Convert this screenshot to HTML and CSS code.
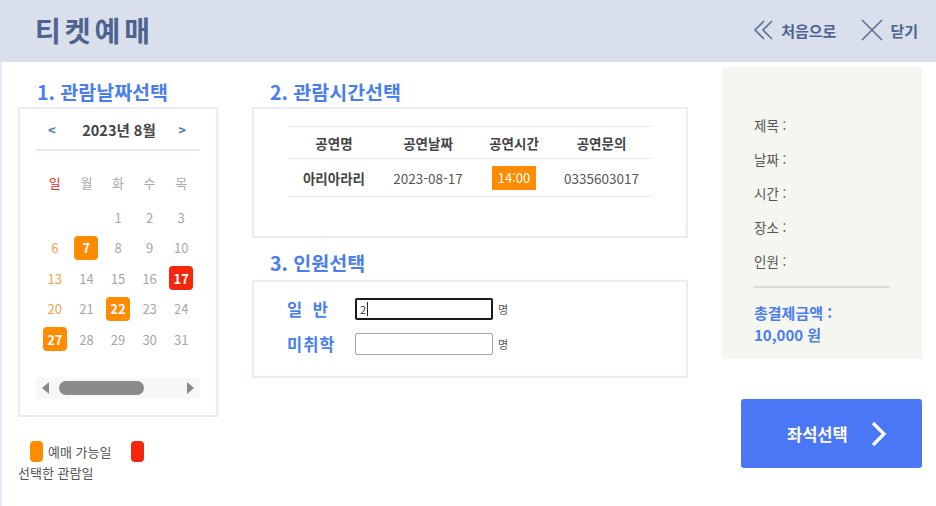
FILE: index.html
```html
<!DOCTYPE html>
<html lang="ko">
<head>
<meta charset="utf-8">
<title>티켓예매</title>
<link rel="stylesheet" href="styles.css">
</head>
<body>
<header class="header">
  <h1 class="brand">티켓예매</h1>
  <nav class="nav">
    <a class="nav-item">
      <svg class="ico" width="22" height="22" viewBox="0 0 22 22"><path d="M11 2 L2 11 L11 20 M19 2 L10 11 L19 20" fill="none" stroke="#5a6e96" stroke-width="1.6"/></svg>
      <span>처음으로</span>
    </a>
    <a class="nav-item">
      <svg class="ico" width="24" height="22" viewBox="0 0 24 22"><path d="M2 1 L22 21 M22 1 L2 21" fill="none" stroke="#5a6e96" stroke-width="1.6"/></svg>
      <span>닫기</span>
    </a>
  </nav>
</header>
<main class="main">
  <section class="col col-date">
    <h2 class="sec-title">1. 관람날짜선택</h2>
    <div class="cal">
      <div class="cal-head">
        <span class="cal-arrow">&lt;</span>
        <span class="cal-month">2023년 8월</span>
        <span class="cal-arrow">&gt;</span>
      </div>
      <div class="cal-grid">
        <span class="wd sun">일</span><span class="wd">월</span><span class="wd">화</span><span class="wd">수</span><span class="wd">목</span>
        <span class="gap-row"></span><span class="gap-row"></span><span class="gap-row"></span><span class="gap-row"></span><span class="gap-row"></span>
        <span class="d"></span><span class="d"></span><span class="d">1</span><span class="d">2</span><span class="d">3</span>
        <span class="d sun">6</span><span class="d"><b class="mark">7</b></span><span class="d">8</span><span class="d">9</span><span class="d">10</span>
        <span class="d sun">13</span><span class="d">14</span><span class="d">15</span><span class="d">16</span><span class="d"><b class="mark sel">17</b></span>
        <span class="d sun">20</span><span class="d">21</span><span class="d"><b class="mark">22</b></span><span class="d">23</span><span class="d">24</span>
        <span class="d"><b class="mark">27</b></span><span class="d">28</span><span class="d">29</span><span class="d">30</span><span class="d">31</span>
      </div>
      <div class="scroll">
        <span class="tri tri-l"></span>
        <span class="thumb"></span>
        <span class="tri tri-r"></span>
      </div>
    </div>
    <p class="legend"><span class="chip"></span>예매 가능일 <span class="chip chip-red"></span> <span class="nowrap">선택한 관람일</span></p>
  </section>

  <section class="col col-mid">
    <h2 class="sec-title">2. 관람시간선택</h2>
    <div class="box box-time">
      <table class="tbl">
        <thead>
          <tr><th class="c1">공연명</th><th class="c2">공연날짜</th><th class="c3">공연시간</th><th class="c4">공연문의</th></tr>
        </thead>
        <tbody>
          <tr><td class="strong">아리아라리</td><td>2023-08-17</td><td><span class="time">14:00</span></td><td>0335603017</td></tr>
        </tbody>
      </table>
    </div>
    <h2 class="sec-title sec-title-3">3. 인원선택</h2>
    <div class="box box-people">
      <div class="prow">
        <span class="plabel">일 반</span>
        <span class="pinput pinput-focus">2<i class="caret"></i></span>
        <span class="unit">명</span>
      </div>
      <div class="prow">
        <span class="plabel">미취학</span>
        <span class="pinput"></span>
        <span class="unit">명</span>
      </div>
    </div>
  </section>

  <aside class="col col-side">
    <div class="summary">
      <p class="sline">제목 :</p>
      <p class="sline">날짜 :</p>
      <p class="sline">시간 :</p>
      <p class="sline">장소 :</p>
      <p class="sline">인원 :</p>
      <hr class="sdiv">
      <p class="total">총결제금액 :<br>10,000 원</p>
    </div>
    <button class="btn-seat">
      <span>좌석선택</span>
      <svg width="18" height="26" viewBox="0 0 18 26"><path d="M3 2 L14 13 L3 24" fill="none" stroke="#fff" stroke-width="3.2"/></svg>
    </button>
  </aside>
</main>
</body>
</html>
```

FILE: styles.css
```css
* { box-sizing: border-box; }
html, body { margin: 0; padding: 0; }
body {
  width: 936px;
  height: 506px;
  overflow: hidden;
  background: #fff;
  font-family: "Noto Sans CJK KR", "Noto Sans", sans-serif;
  color: #555;
}
.header {
  height: 62px;
  background: #d9dfeb;
  display: flex;
  align-items: center;
  justify-content: space-between;
  padding: 0 18px 0 35px;
}
.brand {
  margin: 0;
  font-size: 28px;
  font-weight: 700;
  letter-spacing: 4px;
  color: #4d6390;
  line-height: 1;
  padding-bottom: 3px;
}
.nav { display: flex; align-items: center; gap: 24px; padding-bottom: 2px; }
.nav-item {
  display: flex;
  align-items: center;
  gap: 6px;
  font-size: 15px;
  font-weight: 700;
  color: #4d6390;
}
.main {
  display: flex;
  gap: 34px;
  height: 444px;
  border-left: 2px solid #e2eafa;
  padding-left: 16px;
}
.col { display: flex; flex-direction: column; }
.col-date { width: 200px; }
.col-mid { width: 436px; }
.col-side { width: 200px; padding-top: 5px; }
.sec-title {
  margin: 19px 0 4px 19px;
  font-size: 19.5px;
  line-height: 22px;
  font-weight: 700;
  color: #4a7ef0;
}
.col-mid .sec-title { margin-left: 18px; }
.sec-title-3 { margin-top: 14px !important; margin-bottom: 6px; }

/* calendar */
.cal {
  border: 2px solid #e8edf5;
  padding: 0 16px 16px;
}
.cal-head {
  height: 42px;
  display: flex;
  align-items: center;
  justify-content: space-between;
  padding: 0 14px 0 12px;
  border-bottom: 2px solid #e4e9f1;
}
.cal-arrow { font-size: 13px; font-weight: 700; color: #4a7ca8; }
.cal-month { font-size: 14.5px; font-weight: 700; color: #444; margin-left: 4px; }
.cal-grid {
  width: 158px;
  margin: 16px auto 0;
  display: grid;
  grid-template-columns: repeat(5, 1fr);
  grid-template-rows: 30px 5px;
  grid-auto-rows: 30.5px;
}
.cal-grid .gap-row { grid-row: 2; }
.wd, .d {
  display: flex;
  align-items: center;
  justify-content: center;
  font-size: 13px;
  color: #a6a6a6;
}
.wd { color: #aaa; }
.wd.sun { color: #e8302a; }
.d.sun { color: #f6a04d; }
.mark {
  width: 24px;
  height: 24px;
  border-radius: 4px;
  background: #ff8c00;
  color: #fff;
  font-weight: 700;
  display: flex;
  align-items: center;
  justify-content: center;
}
.mark.sel { background: #f5280d; }
.scroll {
  margin-top: 23px;
  height: 21px;
  background: #f7f7f7;
  display: flex;
  align-items: center;
  padding: 0 6px;
}
.tri { width: 0; height: 0; border-top: 6px solid transparent; border-bottom: 6px solid transparent; }
.tri-l { border-right: 7px solid #888; }
.tri-r { border-left: 7px solid #888; margin-left: auto; }
.thumb {
  width: 85px;
  height: 14px;
  background: #8a8a8a;
  border-radius: 7px;
  margin-left: 10px;
}
.legend {
  margin: 24px 0 0;
  font-size: 13px;
  line-height: 21px;
  color: #555;
  text-indent: 12px;
}
.nowrap { white-space: nowrap; }
.chip {
  display: inline-block;
  width: 13px;
  height: 21px;
  border-radius: 4px;
  background: #ff8c00;
  vertical-align: -5px;
  margin-right: 5px;
}
.chip-red { background: #f5280d; margin-left: 16px; }

/* time box */
.box { border: 2px solid #e8edf5; }
.box-time { height: 131px; padding: 17px 0 0 34px; }
.tbl {
  border-collapse: collapse;
  width: 363px;
  font-size: 13.5px;
}
.tbl th, .tbl td {
  border-top: 1px solid #e8e8e8;
  border-bottom: 1px solid #e8e8e8;
  text-align: center;
  padding: 0;
}
.tbl th { height: 32px; font-weight: 700; color: #444; }
.tbl td { height: 38px; color: #555; }
.tbl .c1 { width: 92px; }
.tbl .c2 { width: 96px; }
.tbl .c3 { width: 76px; }
.tbl .c4 { width: 99px; }
.tbl .strong { font-weight: 700; color: #444; }
.time {
  display: inline-block;
  width: 44px;
  height: 24px;
  line-height: 24px;
  background: #ff8c00;
  color: #fff;
  font-size: 13px;
}

/* people */
.box-people { height: 98px; padding: 16px 0 0 33px; }
.prow { display: flex; align-items: center; height: 22px; margin-bottom: 13px; }
.plabel {
  width: 68px;
  font-size: 16.5px;
  font-weight: 700;
  color: #4a7ef0;
  letter-spacing: 1px;
}
.prow:first-child .plabel { word-spacing: 4px; }
.pinput {
  width: 138px;
  height: 22px;
  border: 1px solid #a9a9a9;
  border-radius: 2px;
  background: #fff;
  font-size: 11px;
  line-height: 18px;
  padding-left: 4px;
  color: #333;
  display: flex;
  align-items: center;
}
.pinput-focus { border: 2px solid #1a1a1a; padding-left: 3px; }
.caret { display: inline-block; width: 1px; height: 14px; background: #222; margin-left: 1px; }
.unit { font-size: 11px; color: #555; margin-left: 5px; }

/* summary */
.summary {
  height: 292px;
  background: #f5f6ef;
  padding: 49px 32px 0 32px;
}
.sline {
  margin: 0 0 16px;
  font-size: 13.5px;
  line-height: 18px;
  color: #555;
}
.sdiv {
  border: 0;
  height: 2px;
  background: #dcdcdc;
  margin: 4px 0 14px -1px;
  width: 137px;
}
.total {
  margin: 0;
  font-size: 15px;
  font-weight: 700;
  line-height: 22px;
  color: #4a7ef0;
}
.btn-seat {
  margin: 40px 0 0 19px;
  width: 181px;
  height: 69px;
  border: 0;
  border-radius: 3px;
  background: #4977f6;
  color: #fff;
  font-family: inherit;
  font-size: 16.5px;
  font-weight: 700;
  display: flex;
  align-items: center;
  padding: 0 0 0 46px;
  gap: 22px;
}
```
